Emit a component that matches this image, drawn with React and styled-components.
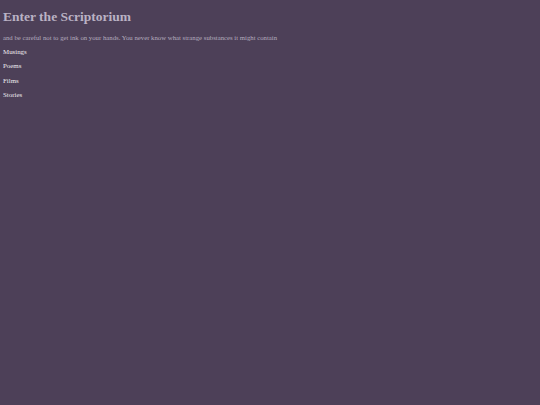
import React from "react";
import styled, { createGlobalStyle } from "styled-components";

const Global = createGlobalStyle`
  html, body { margin: 0; padding: 0; background: #4d4058; }
  body { font-family: "Liberation Serif", "Times New Roman", serif; }
`;

const Page = styled.div`
  min-height: 405px;
  background: #4d4058;
  padding: 3px 3px;
  box-sizing: border-box;
`;

const Title = styled.h1`
  margin: 6px 0 0;
  font-size: 13.5px;
  line-height: 16px;
  font-weight: bold;
  color: #bab2c4;
`;

const Subtitle = styled.p`
  margin: 8px 0 0;
  font-size: 6.75px;
  line-height: 9px;
  color: #b4acbe;
`;

const Nav = styled.nav`
  display: flex;
  flex-direction: column;
  gap: 5.4px;
  margin-top: 5px;
`;

const NavLink = styled.a`
  display: block;
  font-size: 6.9px;
  line-height: 9px;
  font-weight: normal;
  color: #eeecf0;
  text-decoration: none;
`;

export default function App() {
  return (
    <>
      <Global />
      <Page>
        <Title>Enter the Scriptorium</Title>
        <Subtitle>
          and be careful not to get ink on your hands. You never know what strange substances it might contain
        </Subtitle>
        <Nav>
          {["Musings", "Poems", "Films", "Stories"].map((t) => (
            <NavLink key={t} href="#">{t}</NavLink>
          ))}
        </Nav>
      </Page>
    </>
  );
}
